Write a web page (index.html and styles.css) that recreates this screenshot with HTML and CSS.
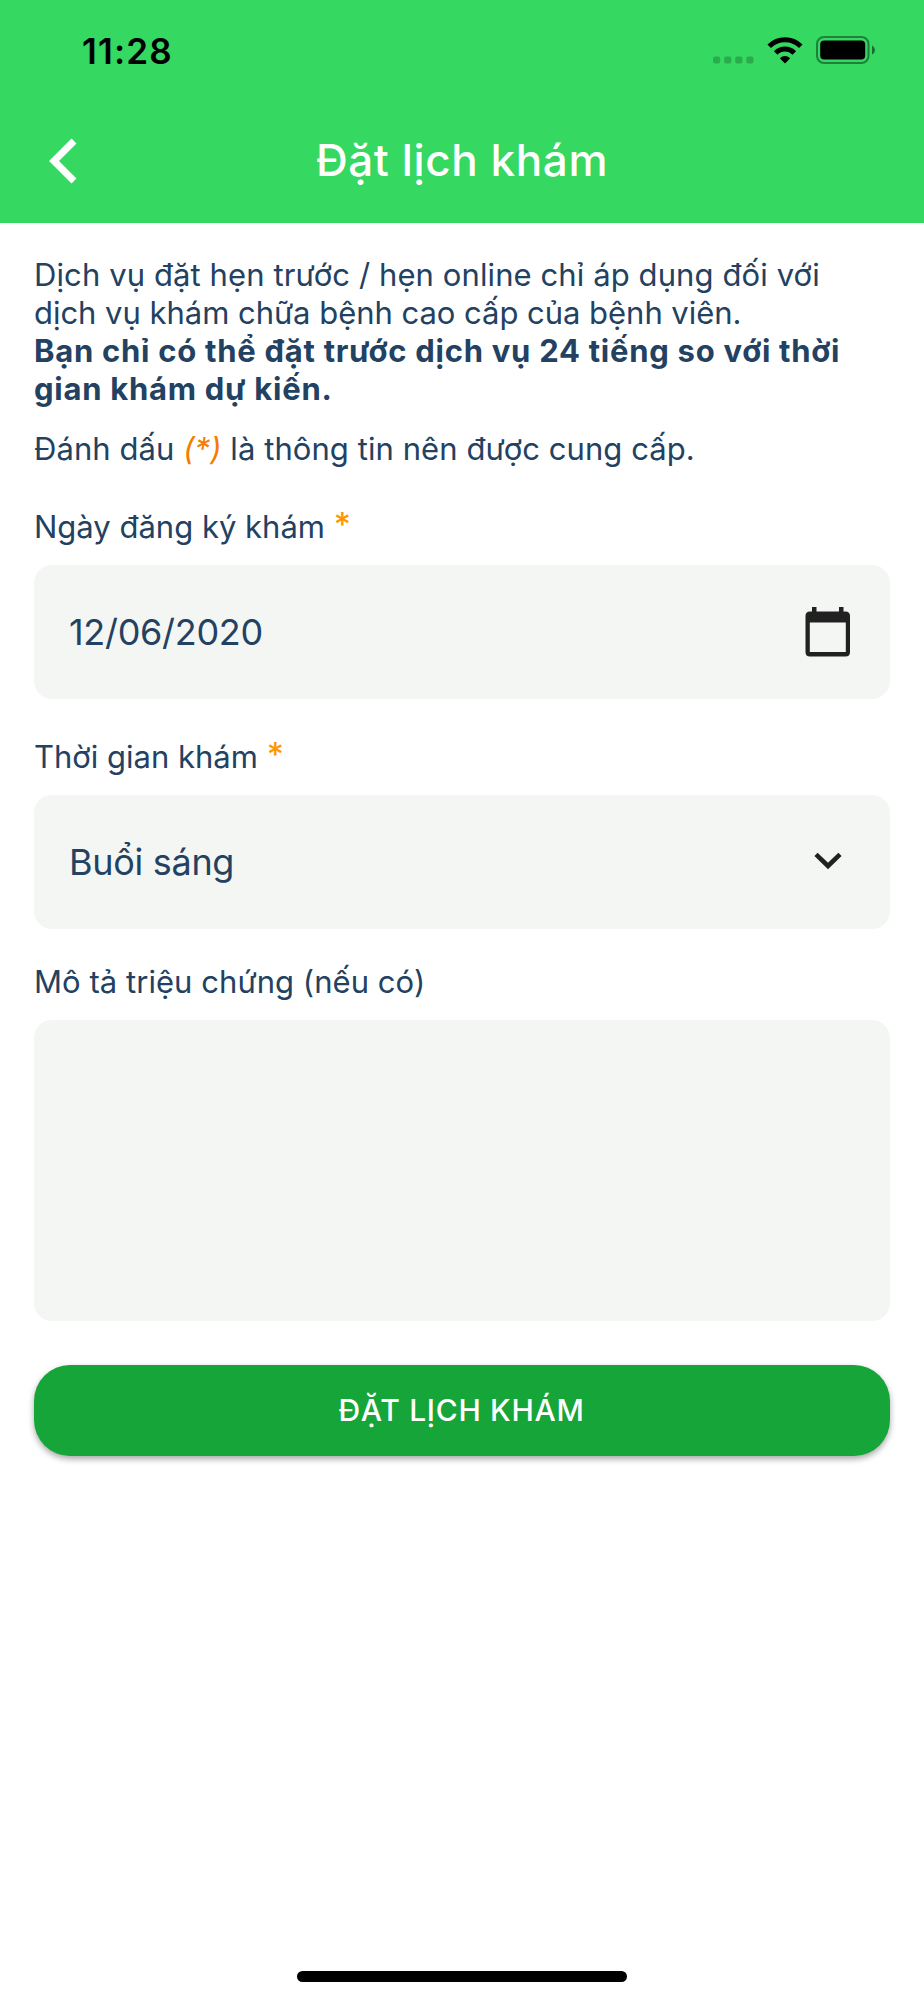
FILE: index.html
```html
<!DOCTYPE html>
<html lang="vi">
<head>
    <meta charset="UTF-8">
    <meta name="viewport" content="width=device-width, initial-scale=1.0">
    <title>Đặt lịch khám</title>
    <link rel="stylesheet" href="styles.css">
</head>
<body>

<header>
    <div class="status-bar">
        <span class="time">11:28</span>
        <div class="status-icons">
            <svg class="signal" width="42" height="8" viewBox="0 0 42 8">
                <rect x="0" y="0.4" width="7.2" height="7.2" rx="2"/>
                <rect x="11.1" y="0.4" width="7.2" height="7.2" rx="2"/>
                <rect x="22.2" y="0.4" width="7.2" height="7.2" rx="2"/>
                <rect x="33.3" y="0.4" width="7.2" height="7.2" rx="2"/>
            </svg>
            <svg class="wifi" width="36" height="27" viewBox="0 0 36 27">
                <path d="M2.2 9.3 A22.3 22.3 0 0 1 33.8 9.3" fill="none" stroke="#000" stroke-width="5"/>
                <path d="M8.7 15.9 A13.2 13.2 0 0 1 27.3 15.9" fill="none" stroke="#000" stroke-width="5"/>
                <path d="M18 26.5 L12.8 21.2 Q18 16.8 23.2 21.2 Z"/>
            </svg>
            <svg class="battery" width="60" height="28" viewBox="0 0 60 28">
                <rect x="1" y="1" width="51.5" height="26" rx="7" fill="none" stroke="#000" stroke-opacity="0.4" stroke-width="2"/>
                <rect x="4.2" y="4.4" width="45" height="19.2" rx="4"/>
                <path d="M56 9.4 Q59 11 59 14 Q59 17 56 18.6 Z" fill-opacity="0.5"/>
            </svg>
        </div>
    </div>
    <div class="nav-bar">
        <a class="back" href="#">
            <svg width="28" height="46" viewBox="0 0 28 46">
                <path d="M25 3 L5 23 L25 43" fill="none" stroke="#fff" stroke-width="7"/>
            </svg>
        </a>
        <h1>Đặt lịch khám</h1>
    </div>
</header>

<main>
    <div class="intro">
        <p>Dịch vụ đặt hẹn trước / hẹn online chỉ áp dụng đối với</p>
        <p class="tight">dịch vụ khám chữa bệnh cao cấp của bệnh viên.</p>
        <p class="strong">Bạn chỉ có thể đặt trước dịch vụ 24 tiếng so với thời<br>gian khám dự kiến.</p>
        <p class="hint">Đánh dấu <em>(*)</em> là thông tin nên được cung cấp.</p>
    </div>

    <form>
        <label class="first" for="date">Ngày đăng ký khám <span class="required">*</span></label>
        <div class="field">
            <input type="text" id="date" value="12/06/2020">
            <svg width="46" height="51" viewBox="0 0 46 51" fill="#212121">
                <path fill-rule="evenodd" d="M7 0 H11.5 V4.5 H34 V0 H38.5 V4.5 H40.5 Q45 4.5 45 9 V45 Q45 49.5 40.5 49.5 H5 Q0.5 49.5 0.5 45 V9 Q0.5 4.5 5 4.5 H7 Z M4.8 15.6 V45 H40.8 V15.6 Z"/>
            </svg>
        </div>

        <label for="period">Thời gian khám <span class="required">*</span></label>
        <div class="field">
            <select id="period">
                <option>Buổi sáng</option>
                <option>Buổi chiều</option>
            </select>
            <svg class="arrow" width="28" height="18" viewBox="0 0 28 18">
                <path d="M2 2.3 L14 14 L26 2.3" fill="none" stroke="#212121" stroke-width="4.6"/>
            </svg>
        </div>

        <label class="last" for="symptoms">Mô tả triệu chứng (nếu có)</label>
        <textarea id="symptoms"></textarea>

        <button type="button">ĐẶT LỊCH KHÁM</button>
    </form>
</main>

<footer>
    <div class="home-indicator"></div>
</footer>

</body>
</html>
```
FILE: styles.css
```css
* {
    box-sizing: border-box;
}
body {
    display: flex;
    flex-direction: column;
    height: 2000px;
    margin: 0;
    background: #fff;
    color: #234161;
    font-family: 'Inter', 'Noto Sans', sans-serif;
    font-size: 31px;
    line-height: 38px;
}
/* Header */
header {
    height: 223px;
    background: #35d860;
}
.status-bar {
    display: flex;
    justify-content: space-between;
    align-items: center;
    height: 100px;
    padding: 0 48px 0 82px;
    color: #000;
}
.time {
    padding-top: 1px;
    font-size: 35px;
    font-weight: 600;
    letter-spacing: 1.2px;
}
.status-icons {
    display: flex;
    align-items: center;
}
.signal {
    margin-top: 19px;
    fill-opacity: 0.2;
}
.wifi {
    margin-left: 12px;
}
.battery {
    margin-left: 13px;
}
.nav-bar {
    display: grid;
    grid-template-columns: 80px 1fr 80px;
    align-items: center;
    height: 121px;
}
.back {
    display: flex;
    padding-left: 49px;
}
h1 {
    margin: 0 0 2px;
    color: #fff;
    font-size: 44px;
    font-weight: 500;
    line-height: 52px;
    letter-spacing: 0.6px;
    text-align: center;
}
/* Content */
main {
    flex: 1;
    padding: 33px 34px 0;
}
p {
    margin: 0;
    white-space: nowrap;
    letter-spacing: 0.1px;
}
.tight {
    letter-spacing: -0.03px;
}
.strong {
    font-weight: 700;
    letter-spacing: 0.73px;
}
.hint {
    margin-top: 22px;
    letter-spacing: 0.07px;
}
.hint em {
    color: #f57c00;
}
label {
    display: block;
    margin: 39px 0 19px;
}
label.first {
    margin-top: 40px;
}
label.last {
    margin-top: 34px;
    letter-spacing: 0.05px;
}
.required {
    color: #ff9800;
    font-size: 33px;
    font-weight: 500;
    line-height: 0;
    vertical-align: 2px;
}
.field {
    display: flex;
    align-items: center;
    height: 134px;
    padding: 0 39px 0 35px;
    border-radius: 18px;
    background: #f4f6f4;
}
.field input,
.field select {
    flex: 1;
    min-width: 0;
    padding: 0;
    border: none;
    outline: none;
    appearance: none;
    background: none;
    color: inherit;
    font: inherit;
    font-size: 36px;
    line-height: 48px;
    letter-spacing: -0.3px;
}
.arrow {
    margin: 0 9px 2px 0;
}
textarea {
    display: block;
    width: 100%;
    height: 301px;
    padding: 30px 36px;
    border: none;
    border-radius: 18px;
    background: #f4f6f4;
    font: inherit;
    resize: none;
}
button {
    display: block;
    width: 100%;
    height: 91px;
    margin-top: 44px;
    padding: 0 1px 2px 0;
    border: none;
    border-radius: 36px;
    background: #15a538;
    box-shadow: 0 3px 6px rgba(0, 0, 0, 0.35);
    color: #fff;
    font-family: inherit;
    font-size: 30px;
    font-weight: 500;
    letter-spacing: 0.7px;
}
/* Bottom bar */
footer {
    padding-bottom: 18px;
}
.home-indicator {
    width: 330px;
    height: 11px;
    margin: 0 auto;
    border-radius: 6px;
    background: #000;
}
```
